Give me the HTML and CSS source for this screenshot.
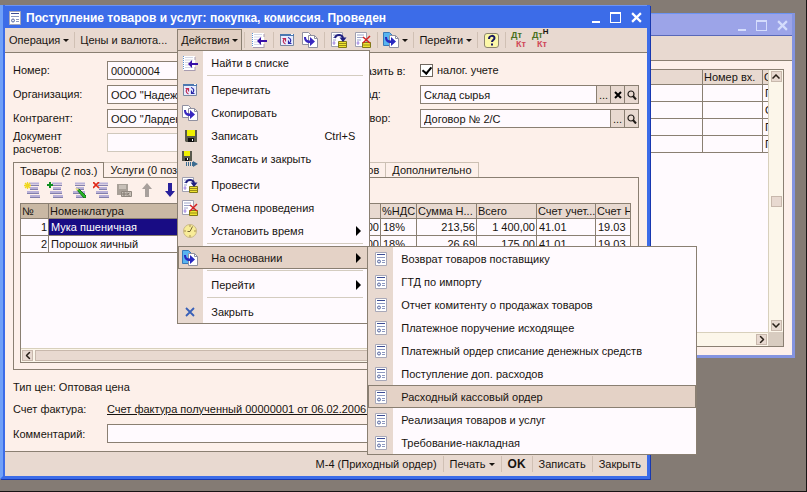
FILE: index.html
```html
<!DOCTYPE html>
<html lang="ru">
<head>
  <meta charset="UTF-8">
  <meta name="viewport" content="width=device-width, initial-scale=1">
  <title>Поступление товаров и услуг</title>
  <link rel="stylesheet" href="styles.css">
</head>
<body>
  <svg class="sprite" aria-hidden="true">
    <symbol id="i-form" viewBox="0 0 12 14">
      <path d="M.5.5h11v13H.5z" fill="#fff" stroke="#a8a8b8"/>
      <path d="M2 2h8v1H2z" fill="#3c4c94"/>
      <path d="M2 5.500h8M7 8.500h3M7 10.500h3" stroke="#8c98c0"/>
      <circle cx="4" cy="9.500" r="1.500" fill="#e4e8f4" stroke="#5868a0"/>
    </symbol>
    <symbol id="i-find" viewBox="0 0 16 16">
      <path d="M1 1h12v14H1z" fill="#fff"/>
      <path d="M1.500 1v14" stroke="#5c94d4" stroke-dasharray="1 1"/>
      <path d="M3.500 2.500h8M3.500 5h8M3.500 7.500h4M3.500 10h4M3.500 12.500h8" stroke="#a8b0cc" stroke-dasharray="1 1"/>
      <path d="M2 15.500h11M13 2v3M13 12v4" stroke="#a89cb0"/>
      <path d="M6 9l4-4v3h6v2h-6v3z" fill="#3810a8"/>
    </symbol>
    <symbol id="i-reread" viewBox="0 0 14 12">
      <path d="M.5.5h13v11H.5z" fill="#e8ecff" stroke="#7888a0"/>
      <path d="M0 0h14v2H0z" fill="#4c78b0"/>
      <path d="M11 .5h2" stroke="#fff"/>
      <path d="M5.500 10C2.500 8.500 2.500 6 5 4.500M2.500 4.500h3v3" fill="none" stroke="#c02850" stroke-width="1.200"/>
      <path d="M8 3.500c3.500 1 3.500 4 1 6M11.500 9.500H8.500V6.500" fill="none" stroke="#2828a8" stroke-width="1.200"/>
    </symbol>
    <symbol id="i-copy" viewBox="0 0 16 16">
      <path d="M.5.500h6l3 3v9h-9z" fill="#fff" stroke="#9090a0"/>
      <path d="M6.500 3.500h6l3 3v9h-9z" fill="#fff" stroke="#9090a0"/>
      <path d="M12.500 3.500v3h3" fill="none" stroke="#9090a0"/>
      <path d="M2 5c0 4 2 6 6 6v3l5-4.500-5-4.500v3.500c-3 0-4-1-4-3.500z" fill="#3828c0"/>
    </symbol>
    <symbol id="i-based" viewBox="0 0 16 16">
      <path d="M.5.500h6l3 3v10h-9z" fill="#58b4f0" stroke="#3878b8"/>
      <path d="M6.500 3.500h6l3 3v9h-9z" fill="#fff" stroke="#9090a0"/>
      <path d="M12.500 3.500v3h3" fill="none" stroke="#9090a0"/>
      <path d="M2 5c0 4 2 6 6 6v3l5-4.500-5-4.500v3.500c-3 0-4-1-4-3.500z" fill="#2828c0"/>
    </symbol>
    <symbol id="i-save" viewBox="0 0 12 12">
      <path d="M0 0h12v12H1l-1-1z" fill="#58584c"/>
      <path d="M2 0h8v6H2z" fill="#f0f000"/>
      <path d="M3 8h6v4H3z" fill="#101010"/>
      <path d="M7 9h1v2H7z" fill="#fff"/>
    </symbol>
    <symbol id="i-saveclose" viewBox="0 0 16 16">
      <path d="M0 0h10v10H0z" fill="#58584c"/>
      <path d="M2 0h6v5H2z" fill="#f0f000"/>
      <path d="M3 7h4v3H3z" fill="#101010"/>
      <path d="M5 7h1v2H5z" fill="#fff"/>
      <path d="M4 11h1v4H4zM6 11h1v4H6zM8 11h1v4H8zM10 11h1v-1l5 3-5 3v-1h-1z" fill="#3c6c90"/>
    </symbol>
    <symbol id="i-post" viewBox="0 0 16 16">
      <path d="M.5.500h11v14H.5z" fill="#fff" stroke="#a0a0b0"/>
      <path d="M2 3h7M2 5.500h3M2 8h3" stroke="#9ca4c8"/>
      <path d="M3 9v4M1.500 11h3" stroke="#9c80e0"/>
      <path d="M7.500 9.500h8v6h-8z" fill="#f0e430" stroke="#807818"/>
      <path d="M8 11.500h7M8 13.500h7" stroke="#988c18"/>
      <path d="M4 6c1-4 7-4 8 0" fill="none" stroke="#202080" stroke-width="2"/>
      <path d="M8.500 5.500h7L12 10z" fill="#202080"/>
    </symbol>
    <symbol id="i-unpost" viewBox="0 0 16 16">
      <path d="M.5.500h11v14H.5z" fill="#fff" stroke="#a0a0b0"/>
      <path d="M2 3h7M2 5.500h7M2 8h4" stroke="#9ca4c8"/>
      <path d="M3 9v4M1.500 11h3" stroke="#9c80e0"/>
      <path d="M7.500 10.500h8v5h-8z" fill="#f0e430" stroke="#807818"/>
      <path d="M8 13h7" stroke="#988c18"/>
      <path d="M8 5l7 6M15 4l-7 7" stroke="#d42020" stroke-width="1.500"/>
    </symbol>
    <symbol id="i-clock" viewBox="0 0 14 14">
      <circle cx="7" cy="7" r="6.500" fill="#f8ec98" stroke="#c8b888"/>
      <path d="M7 1v2M7 11v2M1 7h2M11 7h2" stroke="#a89050"/>
      <path d="M9.500 2.500L7 7.500H4.500" fill="none" stroke="#786838"/>
    </symbol>
    <symbol id="i-close" viewBox="0 0 10 10">
      <path d="M1 1l8 8M9 1L1 9" stroke="#3860b8" stroke-width="1.800"/>
    </symbol>
    <symbol id="i-help" viewBox="0 0 15 15">
      <rect x=".5" y=".5" width="14" height="14" rx="2.500" fill="#fcf8a8" stroke="#8c8470"/>
      <path d="M5 6c0-4 5.500-4 5.500-1 0 2-2.500 2-2.500 4M8 10.500v2" fill="none" stroke="#181860" stroke-width="2"/>
    </symbol>
    <symbol id="i-lines" viewBox="0 0 16 16">
      <path d="M5 1.500h10M6 6h8M3 10h12M6 14h10" stroke="#b8b0d8" stroke-width="2"/>
      <path d="M5 3.500h10M6 7.500h8M3 11.500h12M6 15.500h10" stroke="#8480ac"/>
    </symbol>
    <symbol id="i-add" viewBox="0 0 16 16">
      <use href="#i-lines"/>
      <path d="M3.500 0v7M0 3.500h7M1 1l5 5M6 1L1 6" stroke="#f0d820" stroke-width="1.300"/>
    </symbol>
    <symbol id="i-plus" viewBox="0 0 16 16">
      <use href="#i-lines"/>
      <path d="M3 0v6M0 3h6" stroke="#109020" stroke-width="2"/>
    </symbol>
    <symbol id="i-edit" viewBox="0 0 16 16">
      <use href="#i-lines"/>
      <path d="M7 8l2-1 7 7v2h-2z" fill="#28b828" stroke="#187018"/>
      <path d="M5 6l4 1-2 2z" fill="#f0e080"/>
    </symbol>
    <symbol id="i-del" viewBox="0 0 16 16">
      <use href="#i-lines"/>
      <path d="M0 0l6 6M6 0L0 6" stroke="#e02818" stroke-width="1.700"/>
    </symbol>
    <symbol id="i-ok" viewBox="0 0 16 16">
      <path d="M1 2h11v11H1z" fill="#a8a098"/>
      <path d="M3 3h7v4H3z" fill="#c8c0b8"/>
      <path d="M5.500 9.500h10v5h-10z" fill="#c8c0b8" stroke="#908880"/>
      <path d="M7 11h2v2H7zM11 10.500v3M13.500 11l-2 1 2 2" fill="none" stroke="#807870"/>
    </symbol>
    <symbol id="i-arrow" viewBox="0 0 10 14">
      <path d="M5 0l5 6H7v8H3V6H0z" fill="currentColor"/>
    </symbol>
    <symbol id="i-lens" viewBox="0 0 10 10">
      <circle cx="4" cy="4" r="3" fill="none" stroke="#201c18" stroke-width="1.200"/>
      <path d="M6 6l3 3.500" stroke="#201c18" stroke-width="2"/>
    </symbol>
    <symbol id="i-chevron" viewBox="0 0 8 5">
      <path d="M.5 4.500L4 1l3.500 3.500" fill="none" stroke="#282018" stroke-width="1.500"/>
    </symbol>
  </svg>

  <div class="desktop">

    <!-- document list -->
    <section class="window window-back">
      <header class="titlebar">
        <div class="win-buttons">
          <button class="win-min" aria-label="Свернуть"></button>
          <button class="win-max" aria-label="Развернуть"></button>
          <button class="win-close" aria-label="Закрыть"><svg viewBox="0 0 10 10"><path d="M1 1l8 8M9 1L1 9"/></svg></button>
        </div>
      </header>
      <div class="toolbar"></div>
      <div class="list">
        <div class="list-view">
          <table class="grid">
            <colgroup><col><col class="c-num"><col class="c-cut"></colgroup>
            <thead><tr><th></th><th>Номер вх.</th><th>О</th></tr></thead>
            <tbody>
              <tr><td></td><td></td><td>П</td></tr>
              <tr><td></td><td></td><td>О</td></tr>
              <tr><td></td><td></td><td>П</td></tr>
              <tr><td></td><td></td><td>П</td></tr>
            </tbody>
          </table>
        </div>
        <div class="vscroll">
          <button aria-label="Вверх"><svg class="chev"><use href="#i-chevron"/></svg></button>
          <span class="thumb"></span>
          <button aria-label="Вниз"><svg class="chev down"><use href="#i-chevron"/></svg></button>
        </div>
        <div class="hscroll"><button aria-label="Вправо"><svg class="chev right"><use href="#i-chevron"/></svg></button></div>
        <div class="corner"></div>
      </div>
    </section>

    <!-- document form -->
    <section class="window window-main">
      <header class="titlebar">
        <svg class="title-icon"><use href="#i-form"/></svg>
        <h1>Поступление товаров и услуг: покупка, комиссия. Проведен</h1>
        <div class="win-buttons">
          <button class="win-min" aria-label="Свернуть"></button>
          <button class="win-max" aria-label="Развернуть"></button>
          <button class="win-close" aria-label="Закрыть"><svg viewBox="0 0 10 10"><path d="M1 1l8 8M9 1L1 9"/></svg></button>
        </div>
      </header>

      <div class="toolbar">
        <button class="drop">Операция</button>
        <span class="sep"></span>
        <button class="prices">Цены и валюта...</button>
        <div class="menu-wrap">
          <button class="drop open">Действия</button>
          <ul class="menu">
            <li><button><svg class="i16"><use href="#i-find"/></svg>Найти в списке</button></li>
            <li class="line"></li>
            <li><button><svg class="i14"><use href="#i-reread"/></svg>Перечитать</button></li>
            <li><button><svg class="i16"><use href="#i-copy"/></svg>Скопировать</button></li>
            <li><button><svg class="i12"><use href="#i-save"/></svg>Записать<kbd>Ctrl+S</kbd></button></li>
            <li><button><svg class="i16"><use href="#i-saveclose"/></svg>Записать и закрыть</button></li>
            <li class="space"></li>
            <li><button><svg class="i16"><use href="#i-post"/></svg>Провести</button></li>
            <li><button><svg class="i16"><use href="#i-unpost"/></svg>Отмена проведения</button></li>
            <li><button class="sub"><svg class="i14"><use href="#i-clock"/></svg>Установить время</button></li>
            <li class="line"></li>
            <li>
              <button class="sub selected"><svg class="i16"><use href="#i-based"/></svg>На основании</button>
              <ul class="menu submenu">
                <li><button><svg class="iform"><use href="#i-form"/></svg>Возврат товаров поставщику</button></li>
                <li><button><svg class="iform"><use href="#i-form"/></svg>ГТД по импорту</button></li>
                <li><button><svg class="iform"><use href="#i-form"/></svg>Отчет комитенту о продажах товаров</button></li>
                <li><button><svg class="iform"><use href="#i-form"/></svg>Платежное поручение исходящее</button></li>
                <li><button><svg class="iform"><use href="#i-form"/></svg>Платежный ордер списание денежных средств</button></li>
                <li><button><svg class="iform"><use href="#i-form"/></svg>Поступление доп. расходов</button></li>
                <li><button class="selected"><svg class="iform"><use href="#i-form"/></svg>Расходный кассовый ордер</button></li>
                <li><button><svg class="iform"><use href="#i-form"/></svg>Реализация товаров и услуг</button></li>
                <li><button><svg class="iform"><use href="#i-form"/></svg>Требование-накладная</button></li>
              </ul>
            </li>
            <li class="line"></li>
            <li><button class="sub"><svg class="i16"></svg>Перейти</button></li>
            <li class="line"></li>
            <li><button><svg class="i10"><use href="#i-close"/></svg>Закрыть</button></li>
          </ul>
        </div>
        <span class="sep"></span>
        <button class="tool" aria-label="Найти в списке"><svg class="i16"><use href="#i-find"/></svg></button>
        <span class="sep"></span>
        <button class="tool" aria-label="Перечитать"><svg class="i14"><use href="#i-reread"/></svg></button>
        <button class="tool" aria-label="Скопировать"><svg class="i16"><use href="#i-copy"/></svg></button>
        <span class="sep"></span>
        <button class="tool" aria-label="Провести"><svg class="i16"><use href="#i-post"/></svg></button>
        <button class="tool" aria-label="Отмена проведения"><svg class="i16"><use href="#i-unpost"/></svg></button>
        <span class="sep"></span>
        <button class="drop" aria-label="На основании"><svg class="i16"><use href="#i-based"/></svg></button>
        <span class="sep"></span>
        <button class="drop">Перейти</button>
        <span class="sep"></span>
        <button class="tool" aria-label="Справка"><svg class="i15"><use href="#i-help"/></svg></button>
        <span class="sep"></span>
        <button class="dtkt"><b>Дт</b><i>Кт</i></button>
        <button class="dtkt"><b>Дт<sup>Н</sup></b><i>Кт</i></button>
      </div>

      <form class="form">
        <div class="fields">
          <label for="number">Номер:</label>
          <input id="number" class="text" value="00000004">
          <span class="label-right">Отразить в:</span>
          <label class="check"><input type="checkbox" checked>налог. учете</label>

          <label for="org">Организация:</label>
          <input id="org" class="text" value='ООО "Надежда"'>
          <label class="label-right" for="store">Склад:</label>
          <div class="combo">
            <input id="store" class="text" value="Склад сырья">
            <button type="button">...</button>
            <button type="button" aria-label="Очистить"><svg class="clear" viewBox="0 0 8 8"><path d="M1 1l6 6M7 1L1 7"/></svg></button>
            <button type="button" aria-label="Открыть"><svg class="i10"><use href="#i-lens"/></svg></button>
          </div>

          <label for="partner">Контрагент:</label>
          <input id="partner" class="text" value='ООО "Ларденто"'>
          <label class="label-right" for="contract">Договор:</label>
          <div class="combo">
            <input id="contract" class="text" value="Договор № 2/С">
            <button type="button">...</button>
            <button type="button" aria-label="Открыть"><svg class="i10"><use href="#i-lens"/></svg></button>
          </div>

          <label for="paydoc">Документ<br>расчетов:</label>
          <input id="paydoc" class="text" disabled>
        </div>

        <div class="tabs">
          <button type="button" class="active">Товары (2 поз.)</button>
          <button type="button">Услуги (0 поз.)</button>
          <button type="button" class="wide">Счета учета расчетов</button>
          <button type="button">Дополнительно</button>
        </div>
        <div class="panel">
          <div class="rowtools">
            <button type="button" aria-label="Добавить"><svg class="i16"><use href="#i-add"/></svg></button>
            <button type="button" aria-label="Скопировать строку"><svg class="i16"><use href="#i-plus"/></svg></button>
            <button type="button" aria-label="Изменить"><svg class="i16"><use href="#i-edit"/></svg></button>
            <button type="button" aria-label="Удалить"><svg class="i16"><use href="#i-del"/></svg></button>
            <button type="button" aria-label="Закончить" disabled><svg class="i16"><use href="#i-ok"/></svg></button>
            <button type="button" class="up" aria-label="Вверх" disabled><svg><use href="#i-arrow"/></svg></button>
            <button type="button" class="dn" aria-label="Вниз"><svg><use href="#i-arrow"/></svg></button>
          </div>
          <div class="goods">
            <div class="goods-view">
              <table class="grid">
                <colgroup>
                  <col class="c-no"><col><col class="c-sum"><col class="c-sum"><col class="c-vat">
                  <col class="c-sum"><col class="c-sum"><col class="c-acc"><col class="c-last">
                </colgroup>
                <thead>
                  <tr><th class="cur">№</th><th class="cur">Номенклатура</th><th>Цена</th><th>Сумма</th><th>%НДС</th><th>Сумма Н...</th><th>Всего</th><th>Счет учет...</th><th>Счет Н</th></tr>
                </thead>
                <tbody>
                  <tr><td class="n">1</td><td class="picked">Мука пшеничная</td><td class="n">14,00</td><td class="n">1 400,00</td><td>18%</td><td class="n">213,56</td><td class="n">1 400,00</td><td>41.01</td><td>19.03</td></tr>
                  <tr><td class="n">2</td><td>Порошок яичный</td><td class="n">35,00</td><td class="n">175,00</td><td>18%</td><td class="n">26,69</td><td class="n">175,00</td><td>41.01</td><td>19.03</td></tr>
                </tbody>
              </table>
            </div>
            <div class="hscroll">
              <button type="button" aria-label="Влево"><svg class="chev left"><use href="#i-chevron"/></svg></button>
              <span class="bar"></span>
            </div>
          </div>
        </div>

        <div class="totals">
          <p>Тип цен: Оптовая цена</p>
          <span>Счет фактура:</span>
          <a href="#">Счет фактура полученный 00000001 от 06.02.2006 12:00:00</a>
          <label for="comment">Комментарий:</label>
          <input id="comment" class="text">
        </div>
      </form>

      <footer class="toolbar bottom">
        <button>М-4 (Приходный ордер)</button>
        <span class="sep"></span>
        <button class="drop">Печать</button>
        <span class="sep"></span>
        <button class="ok">OK</button>
        <span class="sep"></span>
        <button>Записать</button>
        <span class="sep"></span>
        <button>Закрыть</button>
      </footer>
    </section>
  </div>
</body>
</html>
```
FILE: styles.css
```css
* {
  margin: 0;
  padding: 0;
  box-sizing: border-box;
}

:root {
  --desk: #847b74;
  --blue: #3c6ce8;
  --blue-dark: #1838b0;
  --pale: #9ca4e8;
  --face: #e8d9d0;
  --body: #fdf0ea;
  --paper: #fffafe;
  --line: #8a7f72;
  --text: #181410;
}

body, button, input, kbd {
  font-family: "Liberation Sans", Arial, sans-serif;
  font-size: 11px;
  color: var(--text);
}

body {
  background: var(--desk);
}

button {
  border: 0;
  background: none;
  white-space: nowrap;
}

svg {
  display: block;
  flex: none;
}

.sprite {
  position: absolute;
  width: 0;
  height: 0;
}

.i16 { width: 16px; height: 16px; }
.i15 { width: 15px; height: 15px; }
.i14 { width: 14px; height: 14px; }
.i12 { width: 12px; height: 12px; }
.i10 { width: 10px; height: 10px; }
.iform { width: 12px; height: 14px; }

.desktop {
  position: relative;
  height: 100vh;
  min-height: 480px;
  border-right: 1px solid #181414;
  border-bottom: 1px solid #181414;
  overflow: hidden;
}

/* Windows */
.window {
  position: absolute;
  display: flex;
  flex-direction: column;
}

.window-main {
  top: 5px;
  left: 0;
  right: 156px;
  bottom: 12px;
  padding-left: 2px;
  border: 3px solid var(--blue);
  border-top: 0;
  border-left-color: #70a0f8;
  background: var(--blue);
  box-shadow: 1px 1px var(--blue-dark);
}

.window-back {
  top: 13px;
  left: 300px;
  right: 11px;
  bottom: 133px;
  border: 3px solid #8494e0;
  border-top: 0;
  background: var(--body);
}

.titlebar {
  display: flex;
  align-items: center;
  gap: 5px;
  height: 23px;
  padding: 1px 5px 0 4px;
  background: var(--blue);
  border-top: 1px solid #6c94f4;
  flex: none;
}

.window-back .titlebar {
  padding-right: 4px;
  background: var(--pale);
  border-bottom: 1px solid #5868b8;
}

.titlebar h1 {
  font-size: 12px;
  font-weight: bold;
  color: #fff;
  white-space: nowrap;
}

.title-icon {
  width: 12px;
  height: 14px;
}

.win-buttons {
  display: flex;
  align-items: center;
  gap: 10px;
  margin-left: auto;
  color: #fff;
}

.window-back .win-buttons {
  color: #d4dcfc;
}

.win-buttons button {
  width: 11px;
  height: 11px;
  color: inherit;
}

.win-buttons .win-min {
  width: 8px;
  border-bottom: 2px solid currentColor;
}

.win-max {
  border: 1px solid currentColor;
  border-top-width: 2px;
}

.win-close svg {
  width: 11px;
  height: 11px;
  fill: none;
  stroke: currentColor;
  stroke-width: 2;
}

/* Toolbars */
.toolbar {
  display: flex;
  align-items: center;
  height: 25px;
  padding: 0 1px;
  background: var(--face);
  border-bottom: 1px solid var(--line);
  flex: none;
}

.toolbar > button,
.menu-wrap > button {
  display: flex;
  align-items: center;
  height: 22px;
  padding: 0 3px;
}

.toolbar > .tool {
  padding: 0 4px;
}

.sep {
  width: 1px;
  height: 16px;
  margin: 0 2px;
  background: #d0c0b4;
}

.drop::after {
  content: "";
  margin-left: 3px;
  border: 3px solid transparent;
  border-top-color: var(--text);
  border-bottom: 0;
}

.prices {
  margin-right: 7px;
}

.menu-wrap {
  position: relative;
}

.toolbar .open {
  border: 1px solid var(--line);
  background: #e0cec2;
}

.toolbar .dtkt {
  display: block;
  height: 20px;
  text-align: left;
  font-size: 9px;
  line-height: 9px;
}

.dtkt b {
  display: block;
  color: #487020;
}

.dtkt i {
  display: block;
  margin-left: 5px;
  font-style: normal;
  font-weight: bold;
  color: #d04858;
}

.dtkt sup {
  font-size: 8px;
  line-height: 1px;
  color: var(--text);
}

.bottom {
  justify-content: flex-end;
  border-top: 1px solid var(--line);
  border-bottom: 0;
  padding-right: 3px;
}

.bottom .sep {
  margin: 0 3px;
}

.bottom .ok {
  font-size: 12px;
  font-weight: bold;
}

/* Menus */
.menu {
  position: absolute;
  z-index: 5;
  top: 21px;
  left: 0;
  width: 193px;
  border: 1px solid var(--line);
  background: linear-gradient(90deg, #e8d9d0 25px, var(--paper) 25px);
  list-style: none;
}

.menu li {
  position: relative;
}

.menu li > button {
  display: flex;
  align-items: center;
  width: 100%;
  height: 23px;
  padding-right: 14px;
  text-align: left;
}

.menu button svg {
  box-sizing: content-box;
  padding-left: 4px;
}

.menu button .i16 { padding-right: 13px; }
.menu button .i14 { padding-left: 5px; padding-right: 14px; }
.menu button .i12 { padding-left: 7px; padding-right: 14px; }
.menu button .i10 { padding-left: 7px; padding-right: 16px; }
.menu button .iform { padding-left: 7px; padding-right: 14px; }

.menu kbd {
  margin-left: auto;
}

.menu .line {
  height: 4px;
  margin: 0 6px 0 29px;
  background: linear-gradient(#d4ccc0, #d4ccc0) 0 1px / 100% 1px no-repeat;
}

.menu .space {
  height: 3px;
}

.menu .sub::after {
  content: "";
  margin-left: auto;
  margin-right: -6px;
  border: 5px solid transparent;
  border-left-color: #000;
  border-right: 0;
}

.menu .selected {
  background: #e4d2c6;
  box-shadow: inset 0 0 0 1px var(--line);
}

.menu .submenu {
  top: 0;
  left: 189px;
  width: 330px;
}

/* Form */
.form {
  display: flex;
  flex-direction: column;
  flex: 1;
  padding: 8px;
  background: var(--body);
}

.text {
  width: 100%;
  height: 19px;
  padding: 0 3px;
  border: 1px solid var(--line);
  background: var(--paper);
  min-width: 0;
}

.text:disabled {
  border-color: #d0c8bc;
}

.fields {
  display: grid;
  grid-template-columns: 94px 1fr 74px 219px;
  grid-auto-rows: 19px;
  row-gap: 5px;
  align-items: center;
}

.fields label {
  line-height: 13px;
}

.fields #number,
.fields #org,
.fields #partner,
.fields #paydoc {
  width: calc(100% - 16px);
}

.check {
  display: flex;
  align-items: center;
  gap: 4px;
}

.check input {
  appearance: none;
  width: 13px;
  height: 13px;
  border: 1px solid #706860;
  background: #fff;
}

.check input:checked::before {
  content: "";
  display: block;
  width: 4px;
  height: 7px;
  margin: 0 0 0 3px;
  border: solid #000;
  border-width: 0 2px 2px 0;
  transform: rotate(40deg);
}

.combo {
  display: flex;
}

.combo button {
  display: flex;
  align-items: center;
  justify-content: center;
  width: 15px;
  height: 19px;
  margin-left: -1px;
  border: 1px solid var(--line);
  background: var(--face);
  flex: none;
}

.clear {
  width: 8px;
  height: 8px;
  stroke: #000;
  stroke-width: 2;
}

/* Tabs */
.tabs {
  display: flex;
  margin-top: 10px;
}

.tabs button {
  height: 15px;
  padding: 0 6px;
  border: 1px solid #ccc0b4;
  border-bottom: 0;
  border-left-width: 0;
}

.tabs .active {
  height: 16px;
  margin-bottom: -1px;
  border: 1px solid var(--line);
  border-bottom: 0;
  background: var(--body);
  z-index: 1;
}

.tabs .wide {
  padding-left: 78px;
}

.panel {
  display: flex;
  flex-direction: column;
  flex: 1;
  padding: 4px 7px 6px 6px;
  border: 1px solid var(--line);
}

.rowtools {
  display: flex;
  gap: 7px;
  height: 21px;
  padding-left: 4px;
}

.rowtools button {
  width: 16px;
  height: 16px;
}

.rowtools .up svg,
.rowtools .dn svg {
  width: 10px;
  height: 14px;
  margin: 0 auto;
}

.rowtools .up { color: #a8a09c; }
.rowtools .dn { color: #28209c; }
.rowtools .dn svg { transform: rotate(180deg); }

.goods {
  display: flex;
  flex-direction: column;
  flex: 1;
  border: 1px solid var(--line);
  background: var(--paper);
}

.goods-view {
  flex: 1;
  overflow: hidden;
}

.grid {
  width: 100%;
  table-layout: fixed;
  border-collapse: separate;
  border-spacing: 0;
}

.grid th,
.grid td {
  height: 17px;
  padding: 0 2px;
  border-right: 1px solid var(--line);
  border-bottom: 1px solid var(--line);
  font-weight: normal;
  line-height: 14px;
  text-align: left;
  white-space: nowrap;
  overflow: hidden;
}

.grid th {
  height: 15px;
  padding: 0 1px;
  background: var(--face);
}

.grid tr > :last-child {
  border-right: 0;
}

.grid .cur { background: #c9b8a4; }
.grid .n { text-align: right; padding: 0 1px; }
.grid .picked { background: #180c84; color: #fff; }

.c-no { width: 28px; }
.c-vat { width: 36px; }
.c-sum { width: 60px; }
.c-acc { width: 59px; }
.c-last { width: 34px; }
.c-num { width: 60px; }
.c-cut { width: 5px; }

/* Scrollbars */
.hscroll {
  display: flex;
  align-items: center;
  gap: 2px;
  height: 14px;
  padding: 1px;
  border-top: 1px solid #d8d0bc;
  background: #fcf6ea;
}

.hscroll button,
.vscroll button,
.thumb,
.bar {
  display: flex;
  align-items: center;
  justify-content: center;
  width: 11px;
  height: 11px;
  border: 1px solid #c8b8ac;
  background: var(--face);
  flex: none;
}

.hscroll .bar {
  flex: 1;
}

.chev {
  width: 8px;
  height: 5px;
}

.down { transform: rotate(180deg); }
.left { transform: rotate(-90deg); }
.right { transform: rotate(90deg); }

/* Lower fields */
.totals {
  display: grid;
  grid-template-columns: 94px 1fr;
  grid-template-rows: 13px 13px 19px;
  row-gap: 9px;
  align-items: center;
  margin-top: 10px;
}

.totals p {
  grid-column: 1 / -1;
}

.totals a {
  color: inherit;
  white-space: nowrap;
}

/* Back window list */
.window-back .list {
  display: grid;
  grid-template-columns: 1fr 15px;
  grid-template-rows: 1fr 14px;
  flex: 1;
  margin: 8px 8px 8px 4px;
  border: 1px solid var(--line);
  background: var(--paper);
}

.list-view {
  overflow: hidden;
}

.vscroll {
  display: flex;
  flex-direction: column;
  justify-content: space-between;
  align-items: center;
  padding: 1px;
  border-left: 1px solid #d8d0bc;
  background: #fcf6ea;
}

.list .hscroll {
  justify-content: flex-end;
}

.corner {
  background: #d8ccc0;
}
```
